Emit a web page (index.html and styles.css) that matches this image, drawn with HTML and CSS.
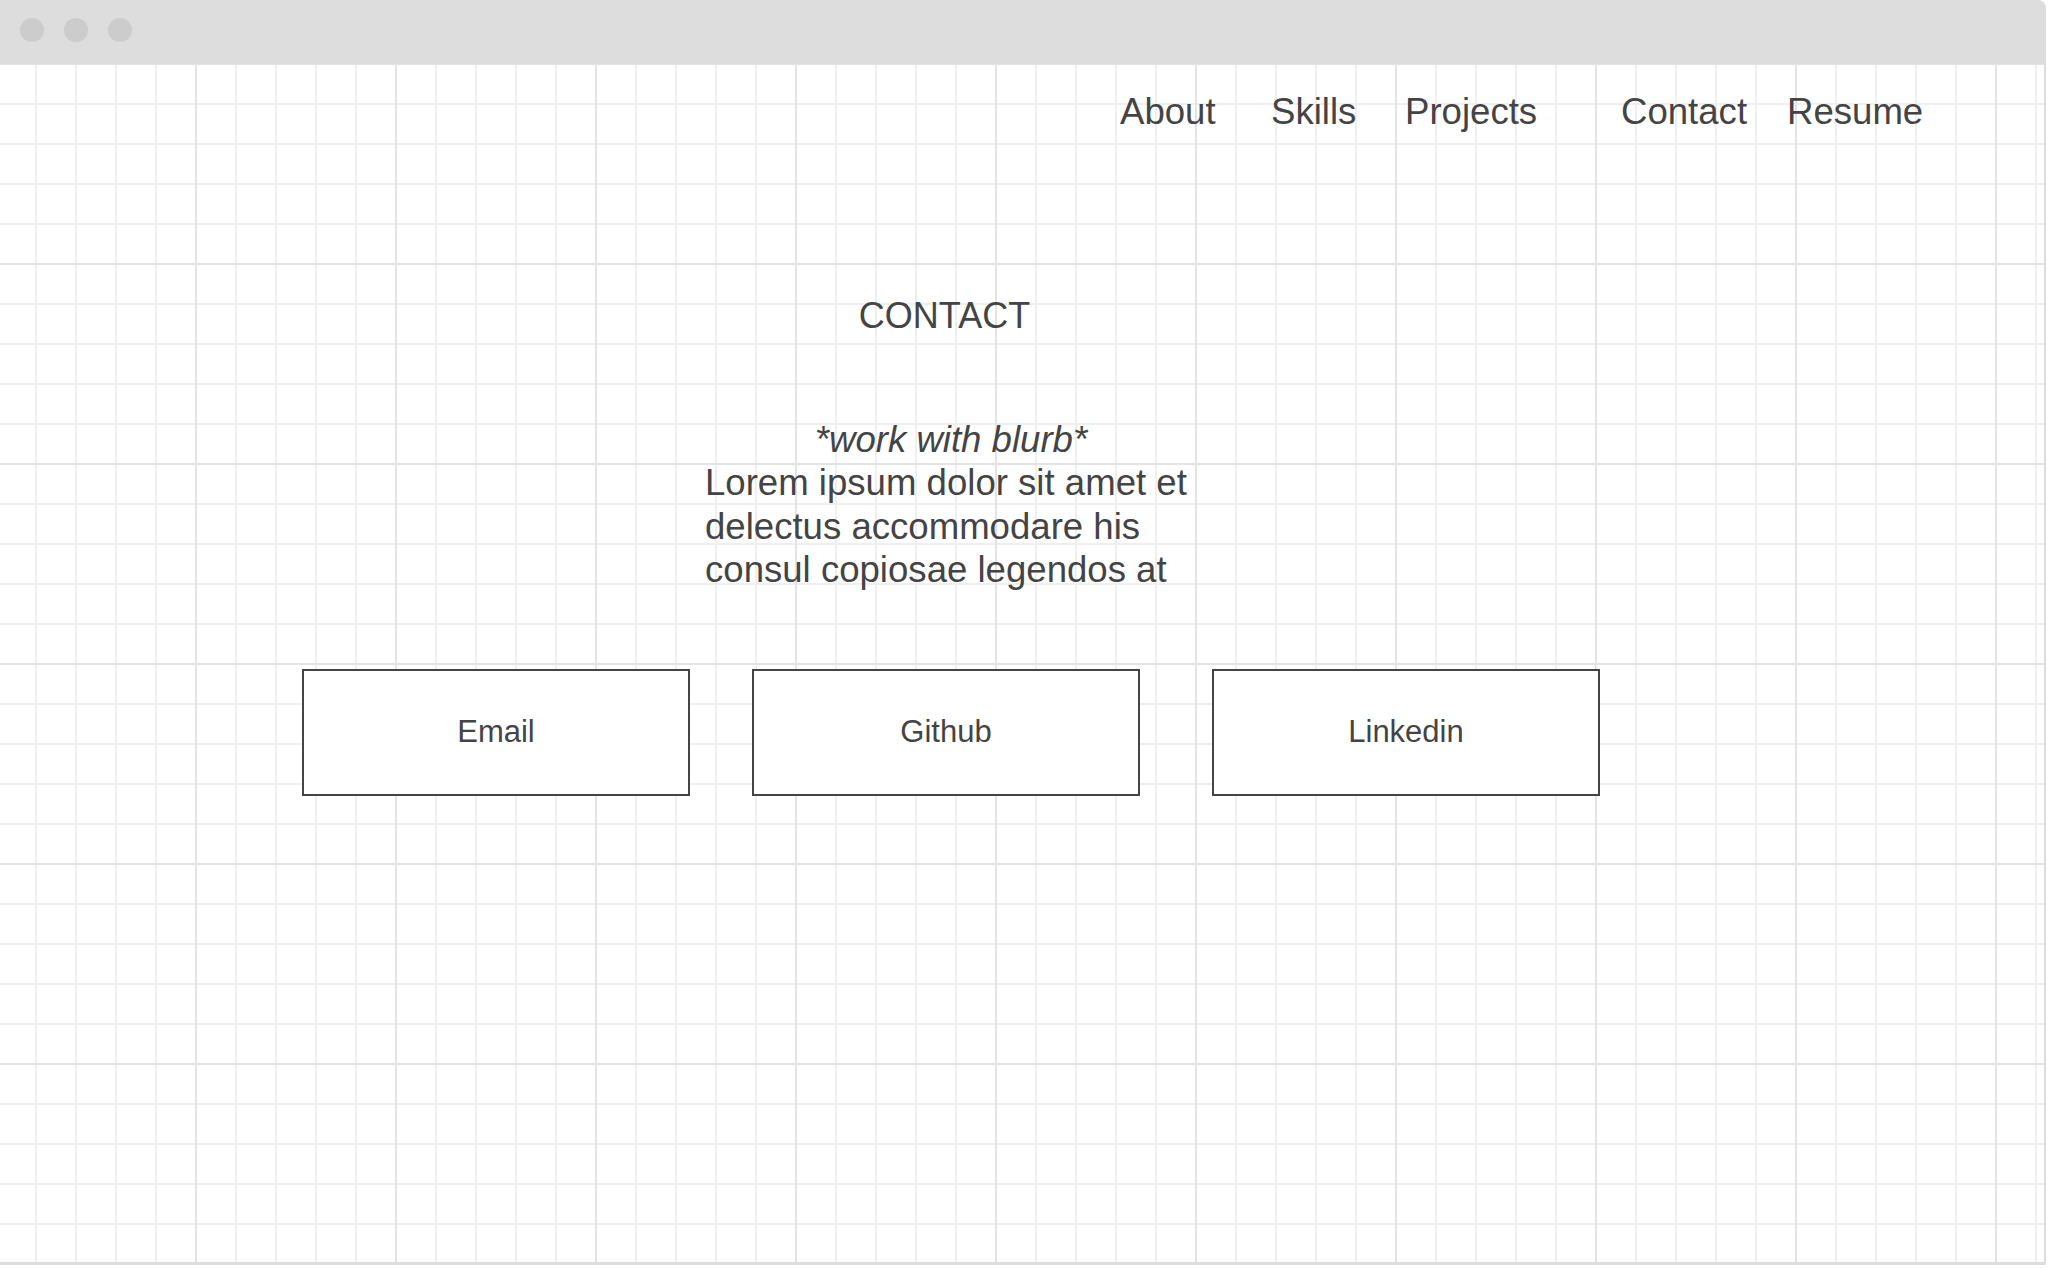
FILE: index.html
```html
<!DOCTYPE html>
<html lang="en">
<head>
<meta charset="utf-8">
<title>Contact</title>
<link rel="stylesheet" href="styles.css">
</head>
<body>
<div class="window">
  <div class="titlebar">
    <span class="dot"></span>
    <span class="dot"></span>
    <span class="dot"></span>
  </div>
  <div class="page">
    <nav class="nav">
      <a class="nav-item nav-about" href="#">About</a>
      <a class="nav-item nav-skills" href="#">Skills</a>
      <a class="nav-item nav-projects" href="#">Projects</a>
      <a class="nav-item nav-contact" href="#">Contact</a>
      <a class="nav-item nav-resume" href="#">Resume</a>
    </nav>
    <section class="contact">
      <h1 class="contact-title">CONTACT</h1>
      <div class="blurb">
        <p class="blurb-note">*work with blurb*</p>
        <p class="blurb-text">Lorem ipsum dolor sit amet et delectus accommodare his consul copiosae legendos at</p>
      </div>
      <div class="links">
        <a class="link" href="#">Email</a>
        <a class="link" href="#">Github</a>
        <a class="link link-last" href="#">Linkedin</a>
      </div>
    </section>
  </div>
</div>
</body>
</html>
```

FILE: styles.css
```css
html, body {
  margin: 0;
  padding: 0;
  background: #ffffff;
  overflow: hidden;
}

body {
  width: 2050px;
  height: 1268px;
  font-family: "Liberation Sans", Arial, sans-serif;
  color: #444444;
}

.window {
  width: 2046px;
  height: 1265px;
  background: #dddddd;
  border-top-right-radius: 8px;
  display: flex;
  flex-direction: column;
  overflow: hidden;
}

.titlebar {
  height: 64px;
  flex: 0 0 64px;
  display: flex;
  align-items: flex-start;
  gap: 20px;
  padding: 18px 0 0 20px;
  box-sizing: border-box;
}

.dot {
  width: 24px;
  height: 24px;
  border-radius: 50%;
  background: #cccccc;
}

.page {
  flex: 1 1 auto;
  margin: 0 2px 3px 0;
  background-color: #ffffff;
  background-image:
    linear-gradient(to right, #e3e3e3 2px, transparent 2px),
    linear-gradient(to bottom, #e3e3e3 2px, transparent 2px),
    linear-gradient(to right, #efefef 2px, transparent 2px),
    linear-gradient(to bottom, #efefef 2px, transparent 2px);
  background-size: 200px 200px, 200px 200px, 40px 40px, 40px 40px;
  background-position: 195px 0, 0 -1px, 35px 0, 0 -1px;
}

.nav {
  display: flex;
  padding: 26px 0 0 1120px;
  font-size: 36.6px;
  line-height: 43px;
}

.nav-item {
  color: #444444;
  text-decoration: none;
}

.nav-about { width: 151px; }
.nav-skills { width: 134px; }
.nav-projects { width: 216px; }
.nav-contact { width: 166px; }

.contact {
  width: 1298px;
  margin-left: 302px;
  padding-top: 161px;
}

.contact-title {
  margin: 0;
  padding-right: 13px;
  font-size: 36px;
  font-weight: normal;
  line-height: 43px;
  text-align: center;
}

.blurb {
  width: 492px;
  margin: 80.5px auto 0;
  font-size: 36.6px;
  line-height: 43.5px;
}

.blurb p {
  margin: 0;
}

.blurb-note {
  font-style: italic;
  text-align: center;
}

.links {
  display: flex;
  gap: 62px;
  margin-top: 77px;
}

.link {
  width: 388px;
  height: 127px;
  box-sizing: border-box;
  border: 2px solid #444444;
  background: #ffffff;
  display: flex;
  align-items: center;
  justify-content: center;
  font-size: 31px;
  color: #444444;
  text-decoration: none;
}

.link-last {
  margin-left: 10px;
}
```
